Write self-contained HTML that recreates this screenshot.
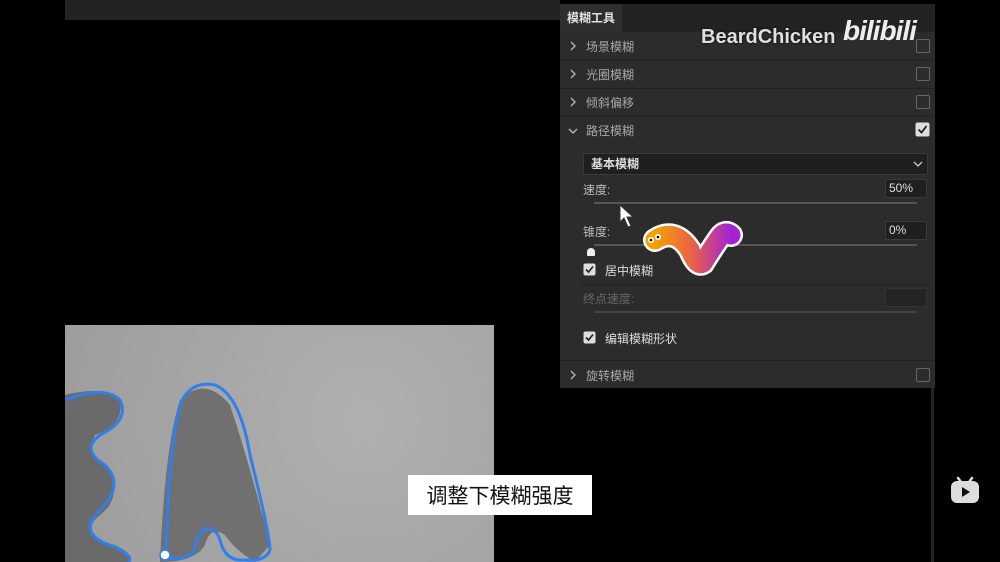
<!DOCTYPE html>
<html><head><meta charset="utf-8"><style>
body{margin:0;width:1000px;height:562px;background:#000;position:relative;overflow:hidden;font-family:"Liberation Sans","Noto Sans CJK SC",sans-serif}
.a{position:absolute}
.panel{left:560px;top:4px;width:375px;height:384px;background:#2c2c2c}
.row{position:absolute;left:0;width:375px;height:28px;border-bottom:1px solid #232323;color:#a8a8a8;font-size:12px}
.row span.t{position:absolute;left:26px;top:6px}
.row svg.c{position:absolute;left:9px;top:9px}
.cb{position:absolute;left:356px;top:7px;width:12px;height:12px;border:1px solid #666;border-radius:2px}
.lab{color:#bbb;font-size:12px}
.track{height:2px;background:#555}
</style></head><body>
<div class="a" style="left:65px;top:0;width:495px;height:20px;background:#232323"></div>
<div class="a panel">
 <div class="a" style="left:0;top:0;width:375px;height:28px;background:#222"></div>
 <div class="a" style="left:0;top:0;width:62px;height:28px;background:#2e2e2e;color:#e0e0e0;font-size:12px;font-weight:bold;line-height:28px;text-align:center">模糊工具</div>
 <div class="row" style="top:28px"><svg class="c" width="8" height="10"><path d="M2 1 L6 5 L2 9" fill="none" stroke="#bbb" stroke-width="1.3"/></svg><span class="t">场景模糊</span><div class="cb"></div></div>
 <div class="row" style="top:56px"><svg class="c" width="8" height="10"><path d="M2 1 L6 5 L2 9" fill="none" stroke="#bbb" stroke-width="1.3"/></svg><span class="t">光圈模糊</span><div class="cb"></div></div>
 <div class="row" style="top:84px"><svg class="c" width="8" height="10"><path d="M2 1 L6 5 L2 9" fill="none" stroke="#bbb" stroke-width="1.3"/></svg><span class="t">倾斜偏移</span><div class="cb"></div></div>
 <div class="row" style="top:112px;border:none"><svg class="c" width="10" height="8" style="left:8px;top:11px"><path d="M1 2 L5 6 L9 2" fill="none" stroke="#bbb" stroke-width="1.3"/></svg><span class="t">路径模糊</span>
  <svg class="a" style="left:355px;top:6px" width="15" height="15"><rect x="0.5" y="0.5" width="14" height="14" rx="2" fill="#ddd"/><path d="M3.5 7.5 L6.5 10.5 L11.5 4" fill="none" stroke="#222" stroke-width="1.8"/></svg></div>
 <div class="a" style="left:23px;top:149px;width:343px;height:20px;background:#1f1f1f;border:1px solid #3a3a3a;border-radius:2px;color:#ddd;font-size:12px;font-weight:bold;line-height:20px;text-indent:7px">基本模糊<svg style="position:absolute;right:4px;top:7px" width="10" height="7"><path d="M1 1 L5 5 L9 1" fill="none" stroke="#ccc" stroke-width="1.3"/></svg></div>
 <div class="a lab" style="left:23px;top:177px">速度:</div>
 <div class="a" style="left:325px;top:175px;width:40px;height:17px;background:#1f1f1f;border:1px solid #3a3a3a;color:#ddd;font-size:12px;line-height:17px;text-indent:3px">50%</div>
 <div class="a track" style="left:34px;top:198px;width:323px"></div>
 <div class="a lab" style="left:23px;top:219px">锥度:</div>
 <div class="a" style="left:325px;top:217px;width:40px;height:17px;background:#1f1f1f;border:1px solid #3a3a3a;color:#ddd;font-size:12px;line-height:17px;text-indent:3px">0%</div>
 <div class="a track" style="left:34px;top:240px;width:323px"></div>
 <div class="a" style="left:27px;top:244px;width:8px;height:8px;background:#eee;border-radius:4px 4px 1px 1px"></div>
 <svg class="a" style="left:23px;top:259px" width="13" height="13"><rect x="0.5" y="0.5" width="12" height="12" rx="2" fill="#ddd"/><path d="M3 6.5 L5.5 9 L10 3.5" fill="none" stroke="#222" stroke-width="1.6"/></svg>
 <div class="a lab" style="left:45px;top:258px;color:#ddd">居中模糊</div>
 <div class="a" style="left:20px;top:280px;width:349px;height:1px;background:#262626"></div>
 <div class="a lab" style="left:23px;top:286px;color:#666">终点速度:</div>
 <div class="a" style="left:325px;top:284px;width:40px;height:17px;background:#242424;border:1px solid #333"></div>
 <div class="a track" style="left:34px;top:307px;width:323px;background:#444"></div>
 <svg class="a" style="left:23px;top:327px" width="13" height="13"><rect x="0.5" y="0.5" width="12" height="12" rx="2" fill="#ddd"/><path d="M3 6.5 L5.5 9 L10 3.5" fill="none" stroke="#222" stroke-width="1.6"/></svg>
 <div class="a lab" style="left:45px;top:326px;color:#ddd">编辑模糊形状</div>
 <div class="row" style="top:356px;border:none;border-top:1px solid #232323"><svg class="c" width="8" height="10"><path d="M2 1 L6 5 L2 9" fill="none" stroke="#bbb" stroke-width="1.3"/></svg><span class="t">旋转模糊</span><div class="cb"></div></div>
</div>
<div class="a" style="left:931px;top:388px;width:3px;height:174px;background:#222"></div>
<div class="a" style="left:701px;top:26px;color:#e0e0e0;font-size:20px;font-weight:bold;text-shadow:0 0 2px #000">BeardChicken</div>
<div class="a" style="left:843px;top:15px;color:#eee;font-size:28px;font-weight:bold;font-style:italic;letter-spacing:-1px">bilibili</div>
<svg class="a" style="left:615px;top:200px" width="30" height="35"><path d="M5 5 L5 22 L9 18 L13 27 L16 26 L12 17 L18 17 Z" fill="#fff" stroke="#333" stroke-width="1"/></svg>
<svg class="a" style="left:635px;top:215px" width="115" height="65">
<defs><linearGradient id="g" x1="0" x2="1"><stop offset="0" stop-color="#f5a000"/><stop offset=".5" stop-color="#e8604a"/><stop offset="1" stop-color="#a322d4"/></linearGradient></defs>
<path d="M20 25 Q40 12 55 35 Q62 52 68 48 Q78 32 85 22 Q90 15 96 20" fill="none" stroke="#fff" stroke-width="24" stroke-linecap="round"/>
<path d="M20 25 Q40 12 55 35 Q62 52 68 48 Q78 32 85 22 Q90 15 96 20" fill="none" stroke="url(#g)" stroke-width="19" stroke-linecap="round"/>
<circle cx="16" cy="25" r="3" fill="#fff"/><circle cx="23" cy="22" r="3" fill="#fff"/>
<circle cx="16" cy="25" r="1.3"/><circle cx="23" cy="22" r="1.3"/>
</svg>
<div class="a" style="left:65px;top:325px;width:429px;height:237px;background:#a8a8a8;background-image:radial-gradient(circle at 70% 40%,#b0b0b0,#9c9c9c)"></div>
<svg class="a" style="left:65px;top:325px" width="429" height="237">
<path d="M0 70 Q40 60 55 75 Q60 100 30 110 Q20 130 40 140 Q60 170 35 190 Q10 210 50 220 Q70 230 65 237 L0 237Z" fill="#6a6a6a"/>
<path d="M95 237 Q100 120 115 75 Q140 50 165 80 Q185 140 205 220 L190 237 Q170 225 160 210 Q145 200 140 220 Q130 237 95 237Z" fill="#707070"/>
<path d="M0 75 Q40 60 55 75 Q65 95 35 110 Q15 125 40 140 Q60 160 35 185 Q10 210 50 222 Q70 232 63 237" fill="none" stroke="#2f7fec" stroke-width="3"/>
<path d="M100 233 L102 200 Q105 120 115 80 Q125 55 150 60 Q175 70 185 130 Q205 210 205 225 Q200 237 180 235 Q160 237 155 215 Q150 200 138 205 Q130 215 130 225 Q125 235 100 233Z" fill="none" stroke="#2f7fec" stroke-width="3"/>
<circle cx="100" cy="230" r="5" fill="#fff" stroke="#2f7fec" stroke-width="1.5"/>
</svg>
<div class="a" style="left:408px;top:475px;width:184px;height:40px;background:#fff;color:#111;font-size:21px;line-height:40px;text-align:center;font-family:'Noto Sans CJK SC',sans-serif">调整下模糊强度</div>
<svg class="a" style="left:948px;top:472px" width="34" height="34"><path d="M10 6 L13 10 M24 6 L21 10" stroke="#ddd" stroke-width="2.5" stroke-linecap="round"/><rect x="3" y="9" width="28" height="22" rx="6" fill="#ddd"/><path d="M14 15 L22 20 L14 25Z" fill="#111"/></svg>
</body></html>
